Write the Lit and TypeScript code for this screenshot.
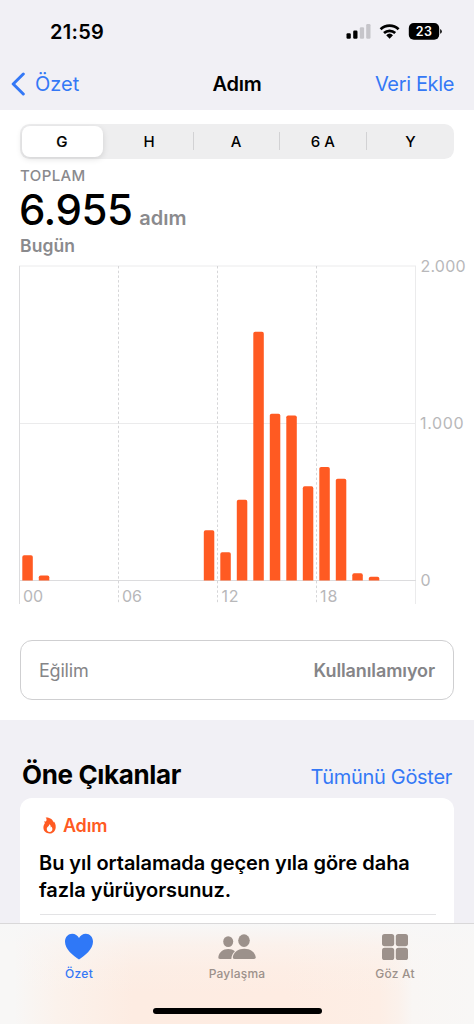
import { LitElement, html, svg, css } from "lit";
import { customElement, state } from "lit/decorators.js";

const STEPS = [
  160, 32, 0, 0, 0, 0, 0, 0, 0, 0, 0, 319, 180, 513, 1583, 1061, 1050, 599,
  723, 648, 45, 24, 0, 0,
];

@customElement("status-bar")
class StatusBar extends LitElement {
  static styles = css`
    :host { display: flex; justify-content: space-between; align-items: center; height: 62px; padding: 0 31px 0 50px; }
    .time { font-size: 20px; font-weight: 600; line-height: 24px; letter-spacing: 0.3px; padding-top: 1px; }
    .icons { display: flex; align-items: center; }
  `;
  render() {
    return html`
      <span class="time">21:59</span>
      <div class="icons">
        <svg width="97" height="20" viewBox="346 21 97 20">
          <rect x="346.5" y="33.2" width="4.3" height="5.6" rx="1.2" />
          <rect x="353.2" y="30.5" width="4.3" height="8.3" rx="1.2" />
          <rect x="359.8" y="27.3" width="4.3" height="11.5" rx="1.2" fill="#c6c5ca" />
          <rect x="366.2" y="24" width="4.3" height="14.8" rx="1.2" fill="#c6c5ca" />
          <g fill="none" stroke="#000" stroke-width="2.7">
            <path d="M380.6 29.3a13.1 13.1 0 0 1 18 0" />
            <path d="M384 33a8.2 8.2 0 0 1 11.2 0" />
          </g>
          <path d="M386.2 35.2a5 5 0 0 1 6.8 0l-3.4 3.5z" />
          <rect x="408.8" y="23" width="30.4" height="16.8" rx="5" />
          <path d="M440.2 29v4.8a2.6 2.6 0 0 0 0-4.8z" />
          <text x="424" y="36.2" text-anchor="middle" fill="#fff" font-family="Inter" font-size="12.5" font-weight="600" letter-spacing=".3">23</text>
        </svg>
      </div>
    `;
  }
}

@customElement("nav-header")
class NavHeader extends LitElement {
  static styles = css`
    :host { display: grid; grid-template-columns: 1fr auto 1fr; align-items: center; height: 48px; padding: 0 20px 4px 20px; box-sizing: border-box; font-size: 20px; line-height: 24px; }
    .back { display: flex; align-items: center; gap: 9px; margin-left: -9px; color: #3478f6; }
    .title { font-weight: 600; letter-spacing: -0.3px; }
    .action { text-align: right; color: #3478f6; letter-spacing: -0.35px; }
  `;
  render() {
    return html`
      <div class="back">
        <svg width="15" height="24" viewBox="0 0 15 24"><path d="M12.3 2 2.2 12l10.1 10" fill="none" stroke="#3478f6" stroke-width="3" stroke-linecap="round" stroke-linejoin="round" /></svg>
        <span>Özet</span>
      </div>
      <div class="title">Adım</div>
      <div class="action">Veri Ekle</div>
    `;
  }
}

@customElement("range-picker")
class RangePicker extends LitElement {
  @state() selected = 0;
  static styles = css`
    :host { display: grid; grid-template-columns: repeat(5, 1fr); height: 35px; border-radius: 9.5px; background: #eeeeef; }
    .seg { display: flex; align-items: center; justify-content: center; padding-right: 2px; font-size: 15px; font-weight: 500; background: linear-gradient(#d2d2d4, #d2d2d4) right center / 1px 18px no-repeat; }
    .seg:last-child { background: none; padding-right: 0; }
    .seg.on { margin: 2px 4px 2px 2px; padding-right: 1px; border-radius: 8px; background: #fff; box-shadow: 0 2px 6px rgba(0, 0, 0, 0.12); -webkit-text-stroke: 0.2px #000; }
  `;
  render() {
    return ["G", "H", "A", "6 A", "Y"].map(
      (t, i) => html`<div class="seg ${i === this.selected ? "on" : ""}" @click=${() => (this.selected = i)}>${t}</div>`
    );
  }
}

@customElement("step-chart")
class StepChart extends LitElement {
  static styles = css`
    :host { display: block; height: 350px; }
    svg { display: block; overflow: visible; }
    .label { font: 400 16px Inter, sans-serif; fill: #b8b8ba; }
  `;
  bar(v: number, i: number) {
    if (!v) return svg``;
    const h = v * 0.157;
    const x = 22.3 + i * 16.5;
    const r = 1.8;
    return svg`<path d="M${x} 580.4v${-(h - r)}q0 ${-r} ${r} ${-r}h${10.5 - 2 * r}q${r} 0 ${r} ${r}v${h - r}z" fill="#ff5a22" />`;
  }
  render() {
    return html`
      <svg width="474" height="350" viewBox="0 260 474 350">
        <g stroke="#ebebec" stroke-width="1">
          <path d="M19 266h397M19 423.5h397M415.5 266v338" />
          <path d="M19.5 266v338M19 580.5h397" stroke="#dcdcde" />
        </g>
        <path d="M118.5 266v338M217.5 266v338M316.5 266v338" stroke="#d6d6d8" stroke-width="1" stroke-dasharray="2.5 2.2" />
        ${STEPS.map((v, i) => this.bar(v, i))}
        <g class="label">
          <text x="420.5" y="272" textLength="45">2.000</text>
          <text x="420" y="429" textLength="43.5">1.000</text>
          <text x="420.5" y="586">0</text>
          <text x="23" y="602" textLength="20">00</text>
          <text x="122" y="602" textLength="20">06</text>
          <text x="221.5" y="602" textLength="17">12</text>
          <text x="320" y="602" textLength="17.5">18</text>
        </g>
      </svg>
    `;
  }
}

@customElement("tab-bar")
class TabBar extends LitElement {
  static styles = css`
    :host { display: flex; flex-direction: column; height: 101px; box-sizing: border-box; border-top: 1px solid #d9d8d9;
      background: linear-gradient(#f7f7f7, rgba(248, 247, 246, 0.45) 22%, rgba(248, 247, 246, 0.15) 45%, rgba(248, 247, 246, 0) 70%),
        linear-gradient(90deg, #f8f7f6 3%, #fbf2ec 12%, #fdece2 28%, #feece2 60%, #fdeee5 80%, #fbf1eb 84%, #f9f6f4 87%, #f8f7f6); }
    .tabs { display: grid; grid-template-columns: repeat(3, 1fr); height: 84px; }
    .tab { display: flex; flex-direction: column; align-items: center; padding-top: 8px; font-size: 12px; font-weight: 500; line-height: 16px; letter-spacing: 0.2px; color: #9c918b; }
    .tab svg { display: block; margin-bottom: 5px; }
    .tab.on { color: #3478f6; letter-spacing: 0.3px; }
    .home { width: 169px; height: 6px; border-radius: 3px; background: #000; align-self: center; }
  `;
  render() {
    return html`
      <div class="tabs">
        <div class="tab on">
          <svg width="30" height="29" viewBox="0 0 30 29"><path d="M15 27.5C9.5 24 1 17.5 1 9.8 1 5 4.3 1.8 8.2 1.8c3 0 5.4 1.6 6.8 4.3 1.4-2.7 3.8-4.3 6.8-4.3C25.7 1.8 29 5 29 9.8 29 17.5 20.5 24 15 27.5z" fill="#2f78f7" /></svg>
          Özet
        </div>
        <div class="tab">
          <svg width="40" height="29" viewBox="0 0 40 29" fill="#9c918b">
            <ellipse cx="11.2" cy="9.6" rx="5" ry="5.4" />
            <path d="M14.3 27H3q-2 0-1.7-1.8C2 20.3 6 17 11.2 17c2.7 0 5 .8 6.7 2.2-2 1.7-3.3 4.1-3.6 7.8z" />
            <ellipse cx="27" cy="8.6" rx="5.8" ry="6.3" />
            <path d="M17.5 27q-2 0-1.7-1.9C16.6 20.2 21.3 16.8 27.3 16.8S37.9 20.2 38.7 25.1q.3 1.900-1.700 1.900z" />
          </svg>
          Paylaşma
        </div>
        <div class="tab">
          <svg width="28" height="29" viewBox="0 0 28 29" fill="#9c918b">
            <rect x="1" y="2" width="12.2" height="12.2" rx="2.6" /><rect x="14.8" y="2" width="12.2" height="12.2" rx="2.6" />
            <rect x="1" y="15.8" width="12.2" height="12.2" rx="2.6" /><rect x="14.8" y="15.8" width="12.2" height="12.2" rx="2.6" />
          </svg>
          Göz At
        </div>
      </div>
      <div class="home"></div>
    `;
  }
}

@customElement("app-root")
class AppRoot extends LitElement {
  static styles = css`
    :host { display: flex; flex-direction: column; height: 1024px; overflow: hidden; background: #f1f0f5; color: #000; font-family: Inter, sans-serif; }
    .top { flex: none; height: 110px; }
    .panel { flex: none; height: 610px; background: #fff; box-sizing: border-box; padding-top: 14px; }
    range-picker { margin: 0 20px; height: 34.5px; }
    .summary { height: 101.5px; box-sizing: border-box; padding: 8px 0 0 20px; color: #8a8a8d; }
    .caption { font-size: 15px; font-weight: 500; line-height: 18px; letter-spacing: 0.4px; }
    .total { display: flex; align-items: baseline; gap: 7px; line-height: 50px; height: 50px; }
    .num { font-size: 42px; font-weight: 450; color: #000; letter-spacing: -0.5px; margin-left: -1px; }
    .unit { font-size: 20px; font-weight: 600; }
    .day { font-size: 17.5px; font-weight: 600; line-height: 22px; letter-spacing: 0.1px; }
    .trend { display: flex; justify-content: space-between; align-items: center; margin: 30px 20px 0; height: 60px; box-sizing: border-box; border: 1px solid #cfcfd1; border-radius: 12px; padding: 0 18px; font-size: 18px; color: #858588; }
    .trend span { letter-spacing: -0.2px; }
    .trend b { font-weight: 600; letter-spacing: -0.1px; }
    .highlights { flex: 1; min-height: 0; overflow: hidden; padding: 0 20px; }
    .head { display: flex; justify-content: space-between; align-items: baseline; height: 78px; box-sizing: border-box; padding: 38px 2px 0; }
    .head h2 { margin: 0; font-size: 26px; font-weight: 700; line-height: 34px; letter-spacing: -0.35px; }
    .head a { font-size: 20px; color: #3478f6; letter-spacing: -0.3px; }
    .card { background: #fff; border-radius: 12px; height: 260px; padding: 16px 18px 0 20px; }
    .kind { display: flex; align-items: center; gap: 7px; height: 22px; color: #ff5a22; font-size: 18px; font-weight: 600; letter-spacing: -0.2px; padding-left: 3px; }
    .msg { margin: 14px 0 11px -1px; font-size: 20px; line-height: 26.5px; font-weight: 600; letter-spacing: -0.05px; white-space: nowrap; }
    .rule { height: 1px; background: #e3e3e5; }
    tab-bar { flex: none; }
  `;
  render() {
    return html`
      <div class="top"><status-bar></status-bar><nav-header></nav-header></div>
      <div class="panel">
        <range-picker></range-picker>
        <div class="summary">
          <div class="caption">TOPLAM</div>
          <div class="total"><span class="num">6.955</span><span class="unit">adım</span></div>
          <div class="day">Bugün</div>
        </div>
        <step-chart></step-chart>
        <div class="trend"><span>Eğilim</span><b>Kullanılamıyor</b></div>
      </div>
      <div class="highlights">
        <div class="head"><h2>Öne Çıkanlar</h2><a>Tümünü Göster</a></div>
        <div class="card">
          <div class="kind">
            <svg width="13" height="17" viewBox="0 0 13 17"><path fill-rule="evenodd" d="M2.6.6C7.5.4 10 3 10.3 5.4c.3-.3.4-.7.4-1.1C12.1 5.8 12.9 8 12.7 10.4 12.4 14 9.9 16.5 6.5 16.5S.4 14.1.4 10.6c0-2.2.9-3.5 1.6-4.6C1.6 5.600 1.2 5 1 4.2c.8.3 1.5.3 2.1 0C3.9 3 3.6 1.7 2.6.6zM6.3 7.2c.2 1.7-2.5 2.500-2.500 4.900a2.800 2.800 0 0 0 5.600 0c0-1.100-.4-2-1-2.700-.1.500-.3.800-.7 1C7.900 9 7.500 7.900 6.300 7.200z" fill="#ff5a22" /></svg>
            <span>Adım</span>
          </div>
          <div class="msg">Bu yıl ortalamada geçen yıla göre daha<br />fazla yürüyorsunuz.</div>
          <div class="rule"></div>
        </div>
      </div>
      <tab-bar></tab-bar>
    `;
  }
}
